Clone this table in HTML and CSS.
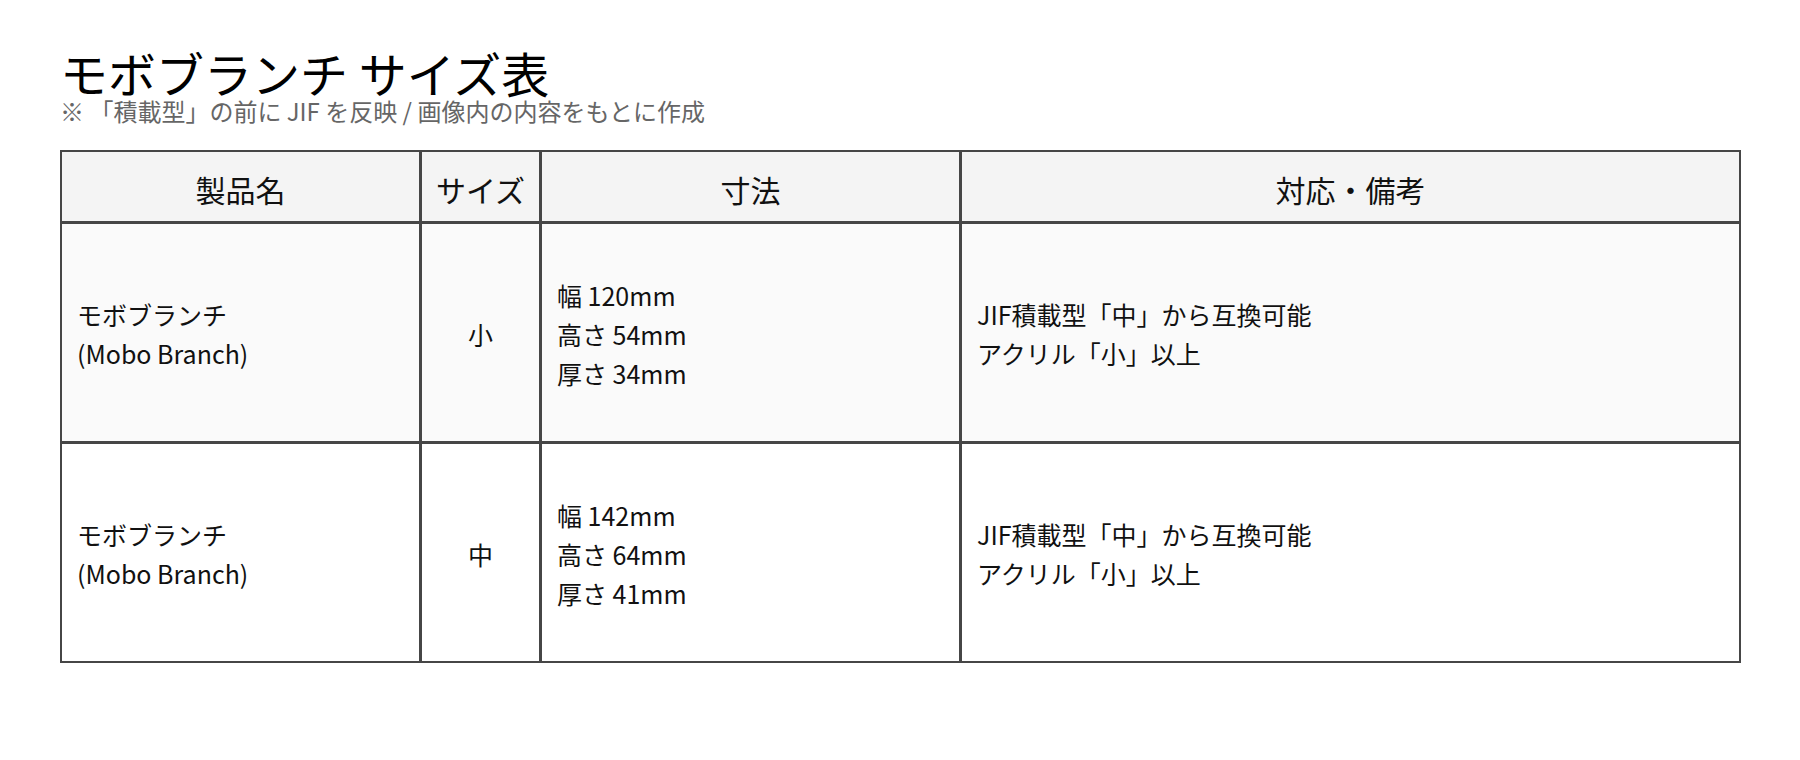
FILE: index.html
```html
<!DOCTYPE html>
<html lang="ja">
<head>
<meta charset="utf-8">
<title>モボブランチ サイズ表</title>
<link rel="stylesheet" href="styles.css">
</head>
<body>
<main class="page">
  <h1 class="title">モボブランチ サイズ表</h1>
  <p class="note">※ 「積載型」の前に JIF を反映 / 画像内の内容をもとに作成</p>
  <div class="table">
    <div class="cell head">製品名</div>
    <div class="cell head">サイズ</div>
    <div class="cell head">寸法</div>
    <div class="cell head">対応・備考</div>

    <div class="cell body odd"><div>モボブランチ<br>(Mobo Branch)</div></div>
    <div class="cell body odd center"><div>小</div></div>
    <div class="cell body odd"><div>幅 120mm<br>高さ 54mm<br>厚さ 34mm</div></div>
    <div class="cell body odd"><div>JIF積載型「中」から互換可能<br>アクリル「小」以上</div></div>

    <div class="cell body"><div>モボブランチ<br>(Mobo Branch)</div></div>
    <div class="cell body center"><div>中</div></div>
    <div class="cell body"><div>幅 142mm<br>高さ 64mm<br>厚さ 41mm</div></div>
    <div class="cell body"><div>JIF積載型「中」から互換可能<br>アクリル「小」以上</div></div>
  </div>
</main>
</body>
</html>
```

FILE: styles.css
```css
* { box-sizing: border-box; }
html, body { margin: 0; padding: 0; background: #ffffff; }
body {
  font-family: "Noto Sans CJK JP", "Noto Sans", sans-serif;
  color: #111111;
}
.page {
  padding: 50px 60px 0 60px;
}
.title {
  margin: 0;
  font-size: 48px;
  line-height: 44px;
  font-weight: 400;
  color: #000000;
}
.note {
  margin: 4px 0 0 0;
  font-size: 24px;
  line-height: 26px;
  color: #666666;
}
.table {
  margin-top: 26px;
  display: grid;
  grid-template-columns: 357px 117px 417px 777px;
  grid-template-rows: 69px 217px 217px;
  gap: 3px;
  width: max-content;
  background: #464646;
  border: 2px solid #464646;
}
.cell {
  display: flex;
  align-items: center;
  padding: 0 15px;
}
.head {
  background: #f4f4f4;
  justify-content: center;
  font-size: 30px;
  line-height: 30px;
  padding: 22px 0 0 0;
  align-items: flex-start;
  white-space: nowrap;
}
.body {
  font-size: 25px;
  line-height: 39px;
  background: #ffffff;
  padding-top: 3px;
}
.body.odd { background: #fafafa; }
.center { justify-content: center; }
```
